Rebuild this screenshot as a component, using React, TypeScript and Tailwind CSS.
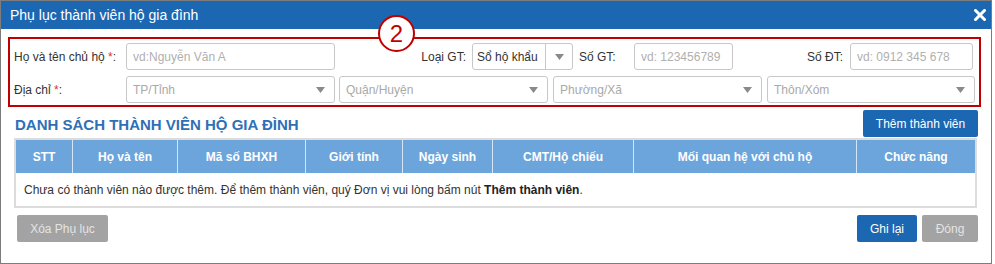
import React from "react";

const Arrow = () => (
  <svg width="9" height="6" viewBox="0 0 9 6" className="shrink-0">
    <path d="M0 0 L9 0 L4.5 6 Z" fill="#8a8a8a" />
  </svg>
);

const Select = ({ w, text }: { w: string; text: string }) => (
  <div className={`${w} h-[27px] border border-[#c8c8c8] rounded-[3px] flex items-center pl-[6px] pr-[9px] bg-white`}>
    <span className="flex-1 truncate text-[#a9a9a9]">{text}</span>
    <Arrow />
  </div>
);

const Input = ({ w, text }: { w: string; text: string }) => (
  <div className={`${w} h-[27px] border border-[#c8c8c8] rounded-[3px] flex items-center pl-[6px] bg-white text-[#b0b0b0] whitespace-nowrap overflow-hidden`}>
    {text}
  </div>
);

const cols: [string, string][] = [
  ["STT", "w-[57px]"],
  ["Họ và tên", "w-[105px]"],
  ["Mã số BHXH", "w-[128px]"],
  ["Giới tính", "w-[97px]"],
  ["Ngày sinh", "w-[90px]"],
  ["CMT/Hộ chiếu", "w-[141px]"],
  ["Mối quan hệ với chủ hộ", "w-[223px]"],
  ["Chức năng", "flex-1"],
];

export default function App() {
  return (
    <div
      className="w-[992px] h-[264px] border border-[#7d7d7d] bg-white text-[12px] text-[#333] relative"
      style={{ fontFamily: '"Liberation Sans", Arial, sans-serif' }}
    >
      {/* header */}
      <div className="h-[28px] bg-[#1c67b2] flex items-center pl-[9px] pr-[5px]">
        <span className="text-white text-[14px] flex-1">Phụ lục thành viên hộ gia đình</span>
        <svg width="12" height="12" viewBox="0 0 12 12">
          <path d="M1.5 1.5 L10.5 10.5 M10.5 1.5 L1.5 10.5" stroke="#fff" strokeWidth="3" strokeLinecap="square" />
        </svg>
      </div>

      {/* circle marker */}
      <div className="absolute left-[377px] top-[14px] w-[37px] h-[37px] rounded-full border-2 border-[#c00000] bg-white flex items-center justify-center">
        <span className="text-[#c00000] text-[24px] leading-none">2</span>
      </div>

      {/* red box */}
      <div className="ml-[7px] mt-[8px] w-[973px] h-[70px] border-2 border-[#c00000] pt-[4px] flex flex-col gap-[6px]">
        <div className="flex items-center h-[27px]">
          <div className="w-[116px] pl-[4px]">
            Họ và tên chủ hộ <span className="text-[#e0302a]">*</span>:
          </div>
          <Input w="w-[209px]" text="vd:Nguyễn Văn A" />
          <div className="w-[137px] text-right pr-[6px]">Loại GT:</div>
          <div className="w-[101px] h-[27px] border border-[#c8c8c8] rounded-[3px] flex items-center bg-white">
            <span className="flex-1 pl-[4px] whitespace-nowrap text-[#333]">Sổ hộ khẩu</span>
            <div className="w-[27px] h-full border-l border-[#c8c8c8] flex items-center justify-center">
              <Arrow />
            </div>
          </div>
          <div className="w-[61px] pl-[6px]">Số GT:</div>
          <Input w="w-[99px]" text="vd: 123456789" />
          <div className="w-[117px] text-right pr-[7px]">Số ĐT:</div>
          <Input w="w-[123px]" text="vd: 0912 345 678" />
        </div>
        <div className="flex items-center h-[27px]">
          <div className="w-[116px] pl-[4px]">
            Địa chỉ <span className="text-[#e0302a]">*</span>:
          </div>
          <Select w="w-[209px]" text="TP/Tỉnh" />
          <div className="w-[4px]" />
          <Select w="w-[209px]" text="Quận/Huyện" />
          <div className="w-[5px]" />
          <Select w="w-[209px]" text="Phường/Xã" />
          <div className="w-[5px]" />
          <Select w="w-[208px]" text="Thôn/Xóm" />
        </div>
      </div>

      {/* list title + add button */}
      <div className="flex items-end justify-between pl-[14px] pr-[13px] mt-[2px] h-[28px]">
        <span className="text-[#2f6fb6] text-[15px] font-bold pb-[1px]">DANH SÁCH THÀNH VIÊN HỘ GIA ĐÌNH</span>
        <div className="w-[115px] h-[27px] bg-[#1c67b2] rounded-[2px] text-white flex items-center justify-center">
          Thêm thành viên
        </div>
      </div>

      {/* table */}
      <div className="ml-[13px] mt-[1px] w-[963px] border-2 border-[#dcdcdc]">
        <div className="flex h-[33px] bg-[#6ba5dc] text-white font-bold">
          {cols.map(([t, w], i) => (
            <div
              key={t}
              className={`${w} flex items-center justify-center ${i < cols.length - 1 ? "border-r border-[#d6e6f6]" : ""}`}
            >
              {t}
            </div>
          ))}
        </div>
        <div className="h-[33px] flex items-center pl-[8px] bg-white">
          Chưa có thành viên nào được thêm. Để thêm thành viên, quý Đơn vị vui lòng bấm nút&nbsp;
          <b className="text-[#222]">Thêm thành viên</b>.
        </div>
      </div>

      {/* bottom buttons */}
      <div className="flex items-center pl-[16px] pr-[13px] mt-[7px]">
        <div className="w-[91px] h-[27px] bg-[#a3a3a3] rounded-[2px] text-[#e4e4e4] flex items-center justify-center">
          Xóa Phụ lục
        </div>
        <div className="flex-1" />
        <div className="w-[60px] h-[27px] bg-[#1c67b2] rounded-[2px] text-white flex items-center justify-center">
          Ghi lại
        </div>
        <div className="w-[56px] h-[27px] ml-[5px] bg-[#a3a3a3] rounded-[2px] text-[#e4e4e4] flex items-center justify-center">
          Đóng
        </div>
      </div>
    </div>
  );
}
